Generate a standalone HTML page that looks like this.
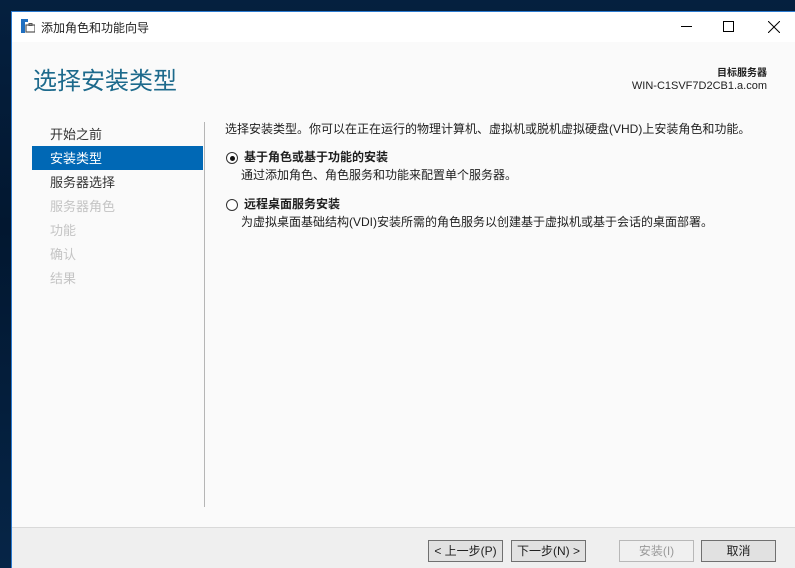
<!DOCTYPE html>
<html><head><meta charset="utf-8"><style>
*{margin:0;padding:0;box-sizing:border-box}
body{width:795px;height:568px;background:linear-gradient(180deg,#05203f,#021730 40%,#062547);font-family:"Liberation Sans","Noto Sans CJK SC",sans-serif;position:relative;overflow:hidden;color:#1e1e1e}
.win{position:absolute;left:11px;top:11px;width:784px;height:557px;background:#fafafa;border-left:1px solid #2b7ad0;border-top:1px solid #2b7ad0}
.tb{position:absolute;left:0;top:0;right:0;height:30px;background:#fff}
.tt{position:absolute;left:29px;top:7px;font-size:12px}
.a{position:absolute;white-space:nowrap;line-height:1.2}
.nav{position:absolute;left:38px;font-size:13px;color:#333;line-height:16px}
.dis{color:#c4c4c4}
.foot{position:absolute;left:0;top:515px;right:0;bottom:0;background:#efefef;border-top:1px solid #d9d9d9}
.btn{position:absolute;top:12px;height:22px;width:75px;border:1px solid #707070;background:#e1e1e1;font-size:12px;text-align:center;line-height:20px}
.radio{position:absolute;width:12px;height:12px;border:1px solid #333;border-radius:50%;background:#fff}
</style></head><body>
<div class="win">
<div class="tb">
<svg style="position:absolute;left:9px;top:7px" width="14" height="14" viewBox="0 0 14 14"><rect x="0" y="0" width="4" height="14" fill="#1f6fc0"/><rect x="0" y="0" width="7" height="3" fill="#1f6fc0"/><rect x="5" y="6" width="9" height="7" fill="none" stroke="#555" stroke-width="1.2"/><rect x="8" y="4.5" width="3" height="2" fill="none" stroke="#555"/></svg>
<div class="tt">添加角色和功能向导</div>
<div class="a" style="left:669px;top:14px;width:11px;height:1px;background:#000"></div>
<div class="a" style="left:711px;top:9px;width:11px;height:11px;border:1px solid #000"></div>
<svg class="a" style="left:756px;top:9px" width="12" height="12"><path d="M0 0L12 12M12 0L0 12" stroke="#000" stroke-width="1"/></svg>
</div>
<div class="a" style="left:21px;top:56px;font-size:24px;color:#1d6a8c">选择安装类型</div>
<div class="a" style="right:28px;top:56px;font-size:10px;font-weight:bold;text-align:right;line-height:12px">目标服务器</div>
<div class="a" style="right:28px;top:68px;font-size:11px;text-align:right;line-height:13px">WIN-C1SVF7D2CB1.a.com</div>
<div class="a" style="left:192px;top:110px;width:1px;height:385px;background:#b5b5b5"></div>
<div class="a" style="left:20px;top:134px;width:171px;height:24px;background:#0068b5"></div>
<div class="nav" style="top:115px">开始之前</div>
<div class="nav" style="top:139px;color:#fff">安装类型</div>
<div class="nav" style="top:163px">服务器选择</div>
<div class="nav dis" style="top:187px">服务器角色</div>
<div class="nav dis" style="top:211px">功能</div>
<div class="nav dis" style="top:235px">确认</div>
<div class="nav dis" style="top:259px">结果</div>
<div class="a" style="left:213px;top:110px;font-size:12px">选择安装类型。你可以在正在运行的物理计算机、虚拟机或脱机虚拟硬盘(VHD)上安装角色和功能。</div>
<div class="radio" style="left:214px;top:140px"><div style="position:absolute;left:2.5px;top:2.5px;width:5px;height:5px;border-radius:50%;background:#111"></div></div>
<div class="a" style="left:232px;top:138px;font-size:12px;font-weight:bold">基于角色或基于功能的安装</div>
<div class="a" style="left:229px;top:156px;font-size:12px">通过添加角色、角色服务和功能来配置单个服务器。</div>
<div class="radio" style="left:214px;top:187px"></div>
<div class="a" style="left:232px;top:185px;font-size:12px;font-weight:bold">远程桌面服务安装</div>
<div class="a" style="left:229px;top:203px;font-size:12px">为虚拟桌面基础结构(VDI)安装所需的角色服务以创建基于虚拟机或基于会话的桌面部署。</div>
<div class="foot">
<div class="btn" style="left:416px">&lt; 上一步(P)</div>
<div class="btn" style="left:499px">下一步(N) &gt;</div>
<div class="btn" style="left:607px;color:#9a9a9a;border-color:#b8b8b8;background:#f0f0f0">安装(I)</div>
<div class="btn" style="left:689px">取消</div>
</div>
</div>
</body></html>
